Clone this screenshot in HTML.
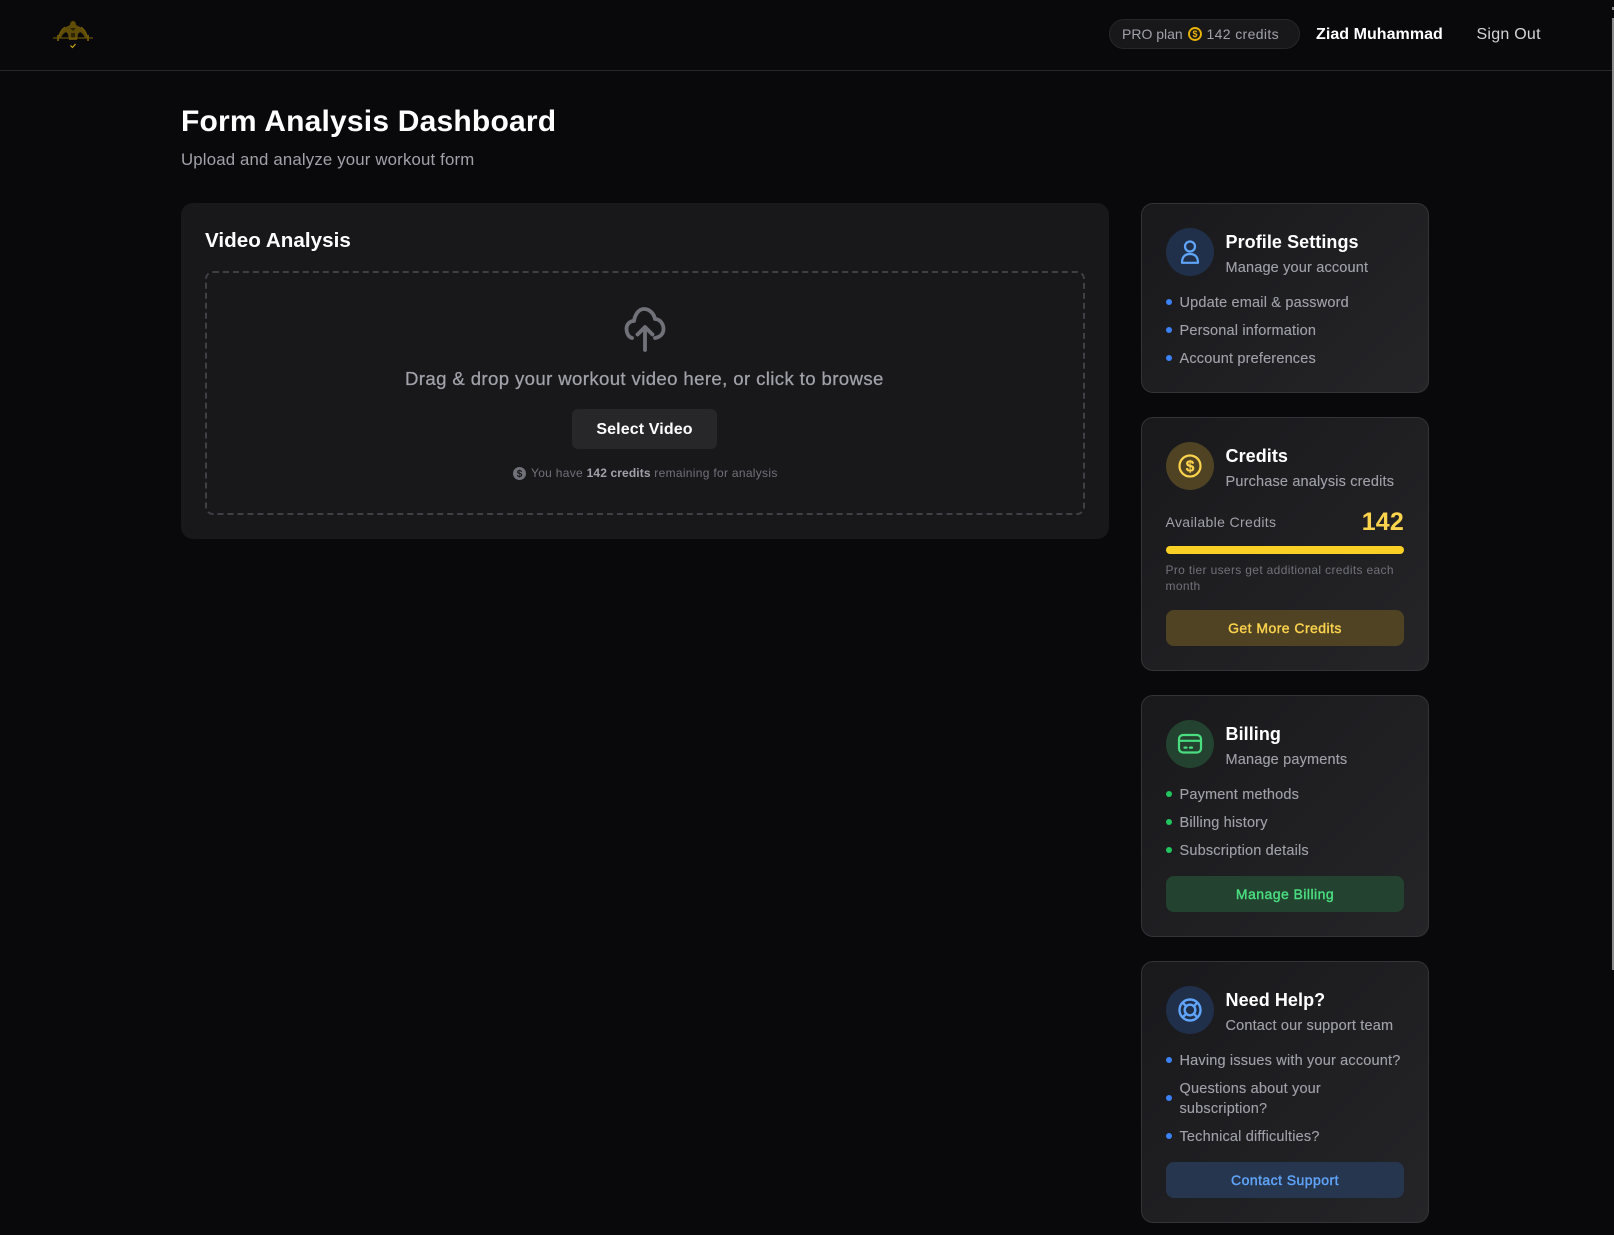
<!DOCTYPE html>
<html lang="en">
<head>
<meta charset="utf-8">
<title>Form Analysis Dashboard</title>
<style>
html,body{margin:0;padding:0;width:1614px;height:1235px;overflow:hidden;background:#09090b;font-family:"Liberation Sans",Arial,sans-serif;color:#a1a1aa}
.t{position:absolute;white-space:nowrap}
.card{position:absolute;left:1141px;width:286px;box-sizing:content-box;border:1px solid #333338;border-radius:12px;background:linear-gradient(135deg,#19191c,#252528)}
.ic{position:absolute;left:1166px;width:48px;height:48px;border-radius:50%}
.h{position:absolute;left:1225.500px;font-size:18px;font-weight:700;line-height:24px;color:#fff;white-space:nowrap;letter-spacing:.07px}
.s{position:absolute;left:1225.500px;margin-top:1.500px;font-size:14.500px;line-height:20px;color:#a1a1aa;white-space:nowrap;letter-spacing:.17px;-webkit-text-stroke:.12px #a1a1aa}
.l{position:absolute;left:1179.500px;margin-top:1px;font-size:14.500px;line-height:20px;color:#a1a1aa;white-space:nowrap;letter-spacing:.18px;-webkit-text-stroke:.12px #a1a1aa}
.d{position:absolute;left:1166px;width:6px;height:6px;border-radius:50%}
.b{position:absolute;left:1166px;width:238px;height:36px;line-height:36px;border-radius:8px;text-align:center;font-size:14px;letter-spacing:.45px;-webkit-text-stroke:.4px currentColor}
svg{position:absolute;overflow:visible}
</style>
</head>
<body>
<!-- header -->
<div style="position:absolute;left:0;top:70px;width:1614px;height:1px;background:#27272a"></div>
<svg style="left:0;top:0" width="120" height="60" viewBox="0 0 120 60" fill="none">
  <path d="M73 21c2 0 3 2 3 4l6 3c3 2 5 5 6 9l-3 1c-1-3-3-5-5-6l-2 2-1 6h-8l-1-6-2-2c-2 1-4 3-5 6l-3-1c1-4 3-7 6-9l6-3c0-2 1-4 3-4z" fill="#5f4c05"/>
  <path d="M70 28l3 3 3-3M71 33h4v5h-4z" fill="#2e2503"/>
  <path d="M65 27c-3 2-5 5-6 9M81 27c3 2 5 5 6 9" stroke="#7a6206" stroke-width="1"/>
  <path d="M53 38H93" stroke="#7a6206" stroke-width="1"/>
  <path d="M58 35v6M88 35v6" stroke="#6b5505" stroke-width="2"/>
  <path d="M70.500 45.500l2 2 3-3.500" stroke="#d4b010" stroke-width="1.100"/>
</svg>
<div style="position:absolute;left:1109px;top:19px;width:189px;height:28px;border:1px solid #27272a;border-radius:15px;background:#18181b"></div>
<div class="t" style="left:1122px;top:24px;font-size:14px;line-height:20px;letter-spacing:0">PRO plan</div>
<svg style="left:1187px;top:26px" width="16" height="16" viewBox="0 0 16 16" fill="none"><circle cx="8" cy="8" r="6" stroke="#eab308" stroke-width="1.900"/><text x="8" y="11.200" text-anchor="middle" font-family="Liberation Sans" font-weight="700" font-size="9" fill="#eab308">$</text></svg>
<div class="t" style="left:1206.500px;top:24px;font-size:14px;line-height:20px;letter-spacing:.36px">142 credits</div>
<div class="t" style="left:1316px;top:25px;font-size:16px;font-weight:700;line-height:20px;color:#fff;letter-spacing:.05px">Ziad Muhammad</div>
<div class="t" style="left:1476.500px;top:25px;font-size:16px;line-height:20px;color:#d4d4d8;letter-spacing:.25px">Sign Out</div>
<div style="position:absolute;left:1612px;top:18px;width:2px;height:952px;background:#8a8a8a"></div>
<div style="position:absolute;left:1612px;top:7px;width:2px;height:3px;background:#8a8a8a"></div>

<!-- title -->
<div class="t" style="left:181px;top:104px;font-size:30px;font-weight:700;line-height:36px;color:#fff;letter-spacing:.2px">Form Analysis Dashboard</div>
<div class="t" style="left:181px;top:148px;font-size:16.800px;line-height:24px;letter-spacing:.17px">Upload and analyze your workout form</div>

<!-- main card -->
<div style="position:absolute;left:181px;top:203px;width:928px;height:336px;border-radius:12px;background:#18181b"></div>
<div class="t" style="left:205px;top:229px;font-size:20.600px;font-weight:700;line-height:24px;color:#fff;letter-spacing:.04px">Video Analysis</div>
<div style="position:absolute;left:205px;top:271px;width:876px;height:240px;border:2px dashed #3f3f46;border-radius:8px"></div>
<svg style="left:620px;top:300px" width="50" height="56" viewBox="620 300 50 56" fill="none" stroke="#71717a" stroke-width="3.800" stroke-linecap="round" stroke-linejoin="round">
  <path d="M632 338C628 337 626.500 332 626.500 329C626.500 324 630 321 634 321C635 314 639 309 644 309C650 309 654 314 655 319C660 319 663.500 324 663.500 329C663.500 334 660 337 655 338"/>
  <path d="M645 350V327M637.500 334.500L645 327L652.500 334.500"/>
</svg>
<div class="t" style="left:405px;top:367px;font-size:18.600px;line-height:24px;letter-spacing:.38px;-webkit-text-stroke:.25px #a1a1aa">Drag &amp; drop your workout video here, or click to browse</div>
<div style="position:absolute;left:572px;top:409px;width:145px;height:40px;line-height:41px;border-radius:6px;background:#27272a;color:#fff;text-align:center;font-size:16px;font-weight:700;letter-spacing:.12px">Select Video</div>
<svg style="left:512px;top:466px" width="15" height="15" viewBox="0 0 15 15"><circle cx="7.500" cy="7.500" r="6.500" fill="#71717a"/><text x="7.500" y="11" text-anchor="middle" font-family="Liberation Sans" font-weight="700" font-size="10" fill="#18181b">$</text></svg>
<div class="t" style="left:531px;top:465px;font-size:12px;line-height:16px;color:#71717a;letter-spacing:.3px">You have <b style="color:#a1a1aa;letter-spacing:.12px">142 credits</b> remaining for analysis</div>

<!-- profile -->
<div class="card" style="top:203px;height:188px"></div>
<div class="ic" style="top:228px;background:#20304b"></div>
<svg style="left:1178px;top:235px" width="24" height="30" viewBox="1178 235 24 30" fill="none" stroke="#60a5fa" stroke-width="2.200" stroke-linejoin="round"><circle cx="1190" cy="246.500" r="5"/><path d="M1182 262.800C1182 256.800 1185 254 1190 254C1195 254 1198 256.800 1198 262.800Z"/></svg>
<div class="h" style="top:230px">Profile Settings</div>
<div class="s" style="top:256px">Manage your account</div>
<div class="d" style="top:299px;background:#3b82f6"></div><div class="l" style="top:292px">Update email &amp; password</div>
<div class="d" style="top:327px;background:#3b82f6"></div><div class="l" style="top:320px">Personal information</div>
<div class="d" style="top:355px;background:#3b82f6"></div><div class="l" style="top:348px">Account preferences</div>

<!-- credits -->
<div class="card" style="top:417px;height:252px"></div>
<div class="ic" style="top:442px;background:#4f4324"></div>
<svg style="left:1176px;top:452px" width="28" height="28" viewBox="0 0 28 28" fill="none"><circle cx="14" cy="14" r="10.500" stroke="#fcd34d" stroke-width="2.200"/><text x="14" y="19.500" text-anchor="middle" font-family="Liberation Sans" font-weight="700" font-size="15.500" fill="#fcd34d" stroke="#fcd34d" stroke-width=".3">$</text></svg>
<div class="h" style="top:443.500px">Credits</div>
<div class="s" style="top:470px">Purchase analysis credits</div>
<div class="t" style="left:1165.500px;top:512px;font-size:14px;line-height:20px;letter-spacing:.36px">Available Credits</div>
<div class="t" style="right:210px;top:506px;font-size:25px;font-weight:700;line-height:32px;color:#fcd34d;letter-spacing:.2px">142</div>
<div style="position:absolute;left:1166px;top:546px;width:238px;height:8px;border-radius:4px;background:#fbd024"></div>
<div class="t" style="left:1165.500px;top:562px;font-size:12px;line-height:16px;color:#71717a;letter-spacing:.34px">Pro tier users get additional credits each</div>
<div class="t" style="left:1165.500px;top:578px;font-size:12px;line-height:16px;color:#71717a;letter-spacing:.34px">month</div>
<div class="b" style="top:610px;background:#4f4324;color:#fcd34d">Get More Credits</div>

<!-- billing -->
<div class="card" style="top:695px;height:240px"></div>
<div class="ic" style="top:720px;background:#234330"></div>
<svg style="left:1176px;top:730px" width="28" height="28" viewBox="1176 730 28 28" fill="none" stroke="#4ade80" stroke-width="2.200"><rect x="1179" y="735" width="22" height="17.500" rx="4"/><path d="M1179 740.800H1201"/><path d="M1184.500 747.600H1186.500M1190 747.600H1192" stroke-linecap="round"/></svg>
<div class="h" style="top:722px">Billing</div>
<div class="s" style="top:748px">Manage payments</div>
<div class="d" style="top:791px;background:#22c55e"></div><div class="l" style="top:784px">Payment methods</div>
<div class="d" style="top:819px;background:#22c55e"></div><div class="l" style="top:812px">Billing history</div>
<div class="d" style="top:847px;background:#22c55e"></div><div class="l" style="top:840px">Subscription details</div>
<div class="b" style="top:876px;background:#234330;color:#4ade80">Manage Billing</div>

<!-- help -->
<div class="card" style="top:961px;height:260px"></div>
<div class="ic" style="top:986px;background:#20304b"></div>
<svg style="left:1176px;top:996px" width="28" height="28" viewBox="0 0 28 28" fill="none" stroke="#60a5fa" stroke-width="2.400"><circle cx="14" cy="14" r="10.500"/><circle cx="14" cy="14" r="5.300"/><path d="M6.600 6.600L10.300 10.300M21.400 6.600L17.700 10.300M6.600 21.400L10.300 17.700M21.400 21.400L17.700 17.700"/></svg>
<div class="h" style="top:988px">Need Help?</div>
<div class="s" style="top:1014px">Contact our support team</div>
<div class="d" style="top:1057px;background:#3b82f6"></div><div class="l" style="top:1050px">Having issues with your account?</div>
<div class="d" style="top:1095px;background:#3b82f6"></div><div class="l" style="top:1078px">Questions about your</div><div class="l" style="top:1098px">subscription?</div>
<div class="d" style="top:1133px;background:#3b82f6"></div><div class="l" style="top:1126px">Technical difficulties?</div>
<div class="b" style="top:1162px;background:#27364f;color:#60a5fa">Contact Support</div>
</body>
</html>
